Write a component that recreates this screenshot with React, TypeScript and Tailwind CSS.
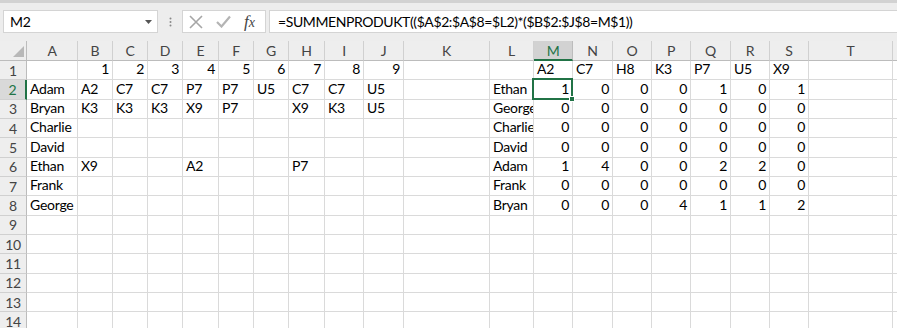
const cols = ["A", "B", "C", "D", "E", "F", "G", "H", "I", "J", "K", "L", "M", "N", "O", "P", "Q", "R", "S", "T", ""];

type Cell = string | number | null;

const _ = null;
const rows: Cell[][] = [
  [_, 1, 2, 3, 4, 5, 6, 7, 8, 9, _, _, "A2", "C7", "H8", "K3", "P7", "U5", "X9"],
  ["Adam", "A2", "C7", "C7", "P7", "P7", "U5", "C7", "C7", "U5", _, "Ethan", 1, 0, 0, 0, 1, 0, 1],
  ["Bryan", "K3", "K3", "K3", "X9", "P7", _, "X9", "K3", "U5", _, "George", 0, 0, 0, 0, 0, 0, 0],
  ["Charlie", _, _, _, _, _, _, _, _, _, _, "Charlie", 0, 0, 0, 0, 0, 0, 0],
  ["David", _, _, _, _, _, _, _, _, _, _, "David", 0, 0, 0, 0, 0, 0, 0],
  ["Ethan", "X9", _, _, "A2", _, _, "P7", _, _, _, "Adam", 1, 4, 0, 0, 2, 2, 0],
  ["Frank", _, _, _, _, _, _, _, _, _, _, "Frank", 0, 0, 0, 0, 0, 0, 0],
  ["George", _, _, _, _, _, _, _, _, _, _, "Bryan", 0, 0, 0, 4, 1, 1, 2],
  [], [], [], [], [], [],
];

const font = { fontFamily: "Lato, 'Noto Sans', sans-serif" };

function FormulaBar() {
  return (
    <div className="h-[41px] bg-[#ededed] border-t-[3px] border-[#d2d2d2] flex items-start pt-[7px]">
      <div className="ml-[3px] w-[155px] h-[23px] bg-white border border-[#d4d4d4] flex items-center justify-between pl-[6px] pr-[5px] text-[14px] tracking-[-0.2px] text-black">
        <span>M2</span>
        <svg width="7" height="4" viewBox="0 0 7 4">
          <path d="M0 0h7L3.5 4z" fill="#555" />
        </svg>
      </div>
      <div className="w-[24px] h-[23px] flex items-center justify-center">
        <svg width="3" height="10" viewBox="0 0 3 10">
          <circle cx="1.5" cy="1.5" r="1" fill="#888" />
          <circle cx="1.5" cy="5" r="1" fill="#888" />
          <circle cx="1.5" cy="8.5" r="1" fill="#888" />
        </svg>
      </div>
      <div className="w-[84px] h-[23px] bg-white border border-[#d4d4d4] flex items-center pl-[6px] gap-[13px]">
        <svg width="14" height="14" viewBox="0 0 14 14">
          <path d="M1 1l12 12M13 1L1 13" stroke="#a6a6a6" strokeWidth="1.6" />
        </svg>
        <svg width="15" height="13" viewBox="0 0 15 13">
          <path d="M1 7l4.5 4.5L14 1.5" stroke="#b4b4b4" strokeWidth="2.2" fill="none" />
        </svg>
        <span className="text-[17px] italic text-[#444] leading-none" style={{ fontFamily: "'Liberation Serif', serif" }}>
          f<span className="text-[14px]">x</span>
        </span>
      </div>
      <div className="ml-[3px] flex-1 h-[23px] bg-white border border-[#d4d4d4] border-r-0 flex items-center pl-[8px] text-[14px] tracking-[-0.4px] text-black whitespace-nowrap">
        =SUMMENPRODUKT(($A$2:$A$8=$L2)*($B$2:$J$8=M$1))
      </div>
    </div>
  );
}

function Sheet() {
  return (
    <div className="grid grid-cols-[27px_51px_35px_35px_35px_36px_35px_35px_36px_39px_40px_86px_44px_39px_40px_39px_39px_40px_39px_39px_84px_1fr] grid-rows-[20px_repeat(14,19.33px)] text-[14px] tracking-[-0.25px] text-black">
      <div className="bg-[#eeeeee] border-r border-b border-[#bcbcbc] flex items-end justify-end pr-[2px] pb-[3px]">
        <svg width="11" height="11" viewBox="0 0 11 11">
          <path d="M11 0v11H0z" fill="#b8b8b8" />
        </svg>
      </div>
      {cols.map((c, i) =>
        c === "M" ? (
          <div key={i} className="bg-[#d2d2d2] border-r border-[#bcbcbc] border-b-2 border-b-[#217346] flex items-center justify-center text-[#217346] overflow-hidden">
            {c}
          </div>
        ) : (
          <div key={i} className="bg-[#eeeeee] border-r border-b border-[#d0d0d0] border-b-[#bcbcbc] flex items-center justify-center text-[#444] overflow-hidden">
            {c}
          </div>
        )
      )}
      {rows.map((r, ri) => (
        <Row key={ri} n={ri + 1} cells={r} />
      ))}
    </div>
  );
}

function Row({ n, cells }: { n: number; cells: Cell[] }) {
  const selected = n === 2;
  return (
    <>
      <div
        className={
          selected
            ? "bg-[#d9d9d9] border-b border-[#d0d0d0] border-r-2 border-r-[#217346] flex items-center justify-center text-[#217346]"
            : "bg-[#eeeeee] border-b border-[#d0d0d0] border-r border-r-[#bcbcbc] flex items-center justify-center text-[#444]"
        }
      >
        {n}
      </div>
      {cols.map((_c, ci) => {
        const v = cells[ci] ?? null;
        const isNum = typeof v === "number";
        const isSel = selected && ci === 12;
        return (
          <div
            key={ci}
            className={
              "border-r border-b border-[#dadada] flex items-end pb-[1px] px-[3px] whitespace-nowrap " +
              (isNum ? "justify-end " : "justify-start ") +
              (isSel ? "relative" : "overflow-hidden")
            }
          >
            <span className="leading-[18px] shrink-0">{v}</span>
            {isSel && (
              <div className="absolute -left-[2px] -top-[2px] -right-px -bottom-px border-2 border-[#217346] z-10">
                <div className="absolute -right-[4px] -bottom-[4px] w-[6px] h-[6px] bg-[#217346] border border-white" />
              </div>
            )}
          </div>
        );
      })}
    </>
  );
}

export default function App() {
  return (
    <div className="w-[897px] h-[328px] overflow-hidden bg-white" style={font}>
      <FormulaBar />
      <Sheet />
    </div>
  );
}
